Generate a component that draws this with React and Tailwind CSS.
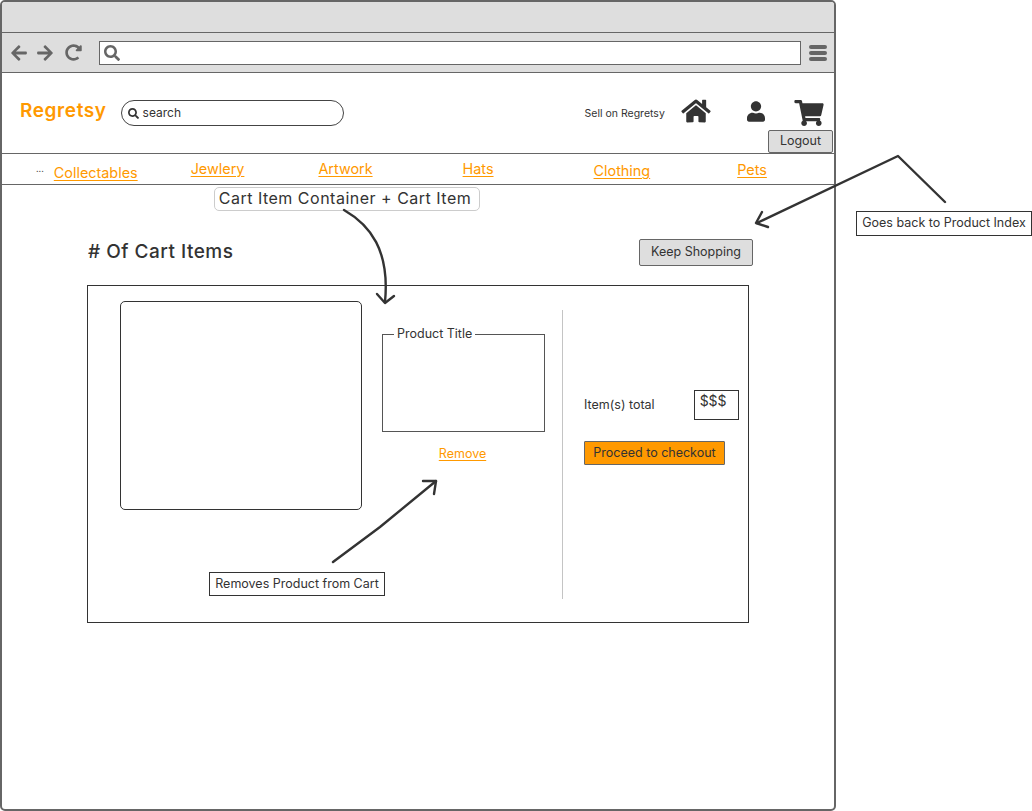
import React from "react";
import { FaArrowLeft, FaArrowRight, FaRedoAlt, FaSearch, FaHome, FaUser, FaShoppingCart } from "react-icons/fa";

const font = { fontFamily: "Inter, 'Noto Sans', sans-serif" };

function NavLink({ className, children }) {
  return <a className={"text-[14.4px] leading-[17px] text-[#ff9900] underline underline-offset-2 " + className}>{children}</a>;
}

export default function App() {
  return (
    <div className="relative w-[1032px] h-[811px] bg-white text-[#333] overflow-hidden" style={font}>
      <div className="w-[836px] h-[811px] border-2 border-[#666] rounded-[5px] flex flex-col bg-white">
        <div className="h-[30px] bg-[#dedede] border-b border-[#666] box-content rounded-t-[3px] shrink-0" />
        <div className="h-[39px] bg-[#dedede] border-b border-[#666] box-content flex items-center text-[#666] shrink-0">
          <FaArrowLeft className="ml-[8px] w-[18px] h-[18px]" />
          <FaArrowRight className="ml-[8px] w-[18px] h-[18px]" />
          <FaRedoAlt className="ml-[11px] w-[17px] h-[17px]" />
          <div className="ml-[17px] w-[702px] h-[24px] bg-white border border-[#666] flex items-center pl-[4px]">
            <FaSearch className="w-[16px] h-[16px] text-[#666]" />
          </div>
          <div className="ml-[8px] w-[18px] flex flex-col gap-[2px]">
            <div className="h-[4px] rounded-full bg-[#666]" />
            <div className="h-[4px] rounded-full bg-[#666]" />
            <div className="h-[4px] rounded-full bg-[#666]" />
          </div>
        </div>

        <div className="h-[80px] flex items-start shrink-0">
          <span className="ml-[18px] mt-[26px] text-[19px] leading-[24px] font-semibold tracking-[0.6px] text-[#ff9900]">Regretsy</span>
          <div className="ml-[14px] mt-[27px] w-[223px] h-[26px] border border-[#444] rounded-[13px] flex items-center pl-[6px]">
            <FaSearch className="w-[11px] h-[11px] text-[#333]" />
            <span className="ml-[4px] text-[12px]">search</span>
          </div>
          <span className="ml-[241px] mt-[34px] text-[10.5px] leading-[14px]">Sell on Regretsy</span>
          <FaHome className="ml-[16px] mt-[25px] w-[30px] h-[26px] text-[#333]" />
          <FaUser className="ml-[36px] mt-[28px] w-[18px] h-[21px] text-[#333]" />
          <FaShoppingCart className="ml-[29px] mt-[27px] w-[30px] h-[26px] text-[#333]" />
        </div>

        <div className="-mx-[2px] h-[32px] box-border border-y border-[#666] flex items-start shrink-0">
          <span className="ml-[36px] mt-[9px] text-[9px] leading-[12px] text-[#555]">...</span>
          <NavLink className="ml-[10px] mt-[10px]">Collectables</NavLink>
          <NavLink className="ml-[53px] mt-[6px]">Jewlery</NavLink>
          <NavLink className="ml-[74px] mt-[6px]">Artwork</NavLink>
          <NavLink className="ml-[90px] mt-[6px]">Hats</NavLink>
          <NavLink className="ml-[100px] mt-[8px]">Clothing</NavLink>
          <NavLink className="ml-[87px] mt-[7px]">Pets</NavLink>
        </div>

        <div className="flex-1 pl-[85px] pr-[83px]">
          <div className="flex items-start justify-between">
            <h1 className="ml-[1px] mt-[55px] text-[19px] leading-[24px] font-medium tracking-[0.5px] text-[#333]"># Of Cart Items</h1>
            <button className="mt-[54px] -mr-[2px] w-[114px] h-[27px] bg-[#dedede] border border-[#666] rounded-[2px] text-[12.5px] text-[#333]">Keep Shopping</button>
          </div>
          <div className="mt-[19px] w-[662px] h-[338px] border border-[#333] flex">
            <div className="ml-[32px] mt-[15px] w-[242px] h-[209px] border border-[#333] rounded-[5px] shrink-0" />
            <div className="ml-[20px] w-[163px] shrink-0">
              <fieldset className="mt-[40px] w-[163px] h-[106px] border border-[#555] pl-[11px] box-border">
                <legend className="px-[3px] pb-[2px] text-[12.5px] leading-[15px]">Product Title</legend>
              </fieldset>
              <div className="mt-[8px] pr-[2px] text-center">
                <a className="text-[12.5px] leading-[16px] text-[#ff9900] underline underline-offset-2">Remove</a>
              </div>
            </div>
            <div className="ml-[17px] mt-[24px] w-px h-[289px] bg-[#c4c4c4]" />
            <div className="ml-[21px] flex-1">
              <div className="mt-[104px] flex items-start">
                <span className="mt-[7px] text-[12.5px] leading-[16px]">Item(s) total</span>
                <div className="ml-[39px] w-[45px] h-[30px] border border-[#333] pl-[5px] text-[14px] leading-[20px]">$$$</div>
              </div>
              <button className="mt-[21px] w-[141px] h-[24px] bg-[#ff9900] border border-[#666] rounded-[1px] text-[12.5px] text-[#333]">Proceed to checkout</button>
            </div>
          </div>
        </div>
      </div>

      <button className="absolute left-[768px] top-[130px] w-[65px] h-[23px] bg-[#dedede] border border-[#666] rounded-[2px] text-[12.5px] text-[#333]">Logout</button>

      <div className="absolute left-[214px] top-[187px] w-[266px] h-[24px] bg-white border border-[#ccc] rounded-[5px] pr-[4px] text-[16px] tracking-[0.5px] leading-[21px] text-center whitespace-nowrap text-[#333]">Cart Item Container + Cart Item</div>
      <div className="absolute left-[856px] top-[211px] w-[176px] h-[25px] bg-white border border-[#333] text-[12.5px] leading-[21px] text-center whitespace-nowrap">Goes back to Product Index</div>
      <div className="absolute left-[209px] top-[572px] w-[176px] h-[24px] bg-white border border-[#333] text-[12.5px] leading-[22px] text-center whitespace-nowrap">Removes Product from Cart</div>

      <svg className="absolute left-0 top-0 pointer-events-none" width="1032" height="811" fill="none" stroke="#333" strokeWidth="2.4" strokeLinecap="round" strokeLinejoin="round">
        <path d="M945 202 L898 156 L757 223" />
        <path d="M762 212 L756 223 L768 227" />
        <path d="M344 210 C370 225 390 250 385 302" />
        <path d="M377 294 L385 303 L394 296" />
        <path d="M333 562 L380 527 L436 481" />
        <path d="M423 481 L436 481 L434 494" />
      </svg>
    </div>
  );
}
